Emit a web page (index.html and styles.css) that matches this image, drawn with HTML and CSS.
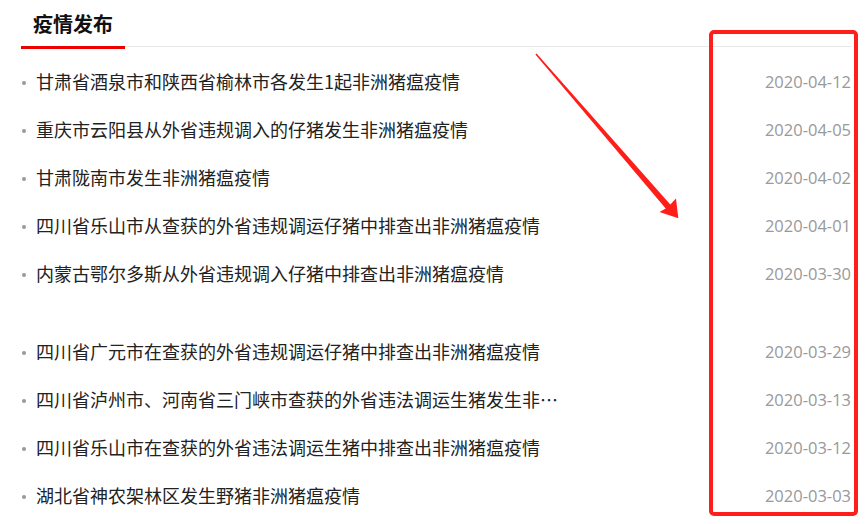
FILE: index.html
```html
<!DOCTYPE html>
<html>
<head>
    <meta charset="utf-8">
    <title>疫情发布</title>
    <link rel="stylesheet" href="styles.css">
</head>
<body>
    <div class="panel">
        <div class="panel-head">
            <h2 class="tab">疫情发布</h2>
        </div>

        <ul class="news-list">
            <li class="news-item"><span class="news-title">甘肃省酒泉市和陕西省榆林市各发生1起非洲猪瘟疫情</span><span class="news-date">2020-04-12</span></li>
            <li class="news-item"><span class="news-title">重庆市云阳县从外省违规调入的仔猪发生非洲猪瘟疫情</span><span class="news-date">2020-04-05</span></li>
            <li class="news-item"><span class="news-title">甘肃陇南市发生非洲猪瘟疫情</span><span class="news-date">2020-04-02</span></li>
            <li class="news-item"><span class="news-title">四川省乐山市从查获的外省违规调运仔猪中排查出非洲猪瘟疫情</span><span class="news-date">2020-04-01</span></li>
            <li class="news-item"><span class="news-title">内蒙古鄂尔多斯从外省违规调入仔猪中排查出非洲猪瘟疫情</span><span class="news-date">2020-03-30</span></li>
        </ul>

        <ul class="news-list">
            <li class="news-item"><span class="news-title">四川省广元市在查获的外省违规调运仔猪中排查出非洲猪瘟疫情</span><span class="news-date">2020-03-29</span></li>
            <li class="news-item"><span class="news-title">四川省泸州市、河南省三门峡市查获的外省违法调运生猪发生非洲猪瘟疫情</span><span class="news-date">2020-03-13</span></li>
            <li class="news-item"><span class="news-title">四川省乐山市在查获的外省违法调运生猪中排查出非洲猪瘟疫情</span><span class="news-date">2020-03-12</span></li>
            <li class="news-item"><span class="news-title">湖北省神农架林区发生野猪非洲猪瘟疫情</span><span class="news-date">2020-03-03</span></li>
        </ul>
    </div>

    <!-- 标注：红框和箭头 -->
    <div class="mark-box"></div>
    <svg class="mark-arrow" width="868" height="524" viewBox="0 0 868 524">
        <polygon fill="#ff1f1a" points="536.6,53.5 670.3,204.5 676,198.5 678.3,218.3 659.5,212 665.7,208.5 535.4,54.5"/>
    </svg>
</body>
</html>
```

FILE: styles.css
```css
body {
    margin: 0;
    background: #fff;
    font-family: "Noto Sans CJK SC", "Microsoft YaHei", sans-serif;
}
.panel {
    width: 830px;
    margin-left: 21px;
}
.panel-head {
    display: flex;
    border-bottom: 1px solid #e8e8e8;
}
.tab {
    margin: 0 0 -3px 0;
    padding: 10px 12px 8px;
    font-size: 20px;
    line-height: 28px;
    font-weight: bold;
    color: #111;
    border-bottom: 3px solid #e00;
}
.news-list {
    list-style: none;
    margin: 10px 0 0;
    padding: 0;
}
.news-list + .news-list {
    margin-top: 30px;
}
.news-item {
    display: flex;
    align-items: center;
    justify-content: space-between;
    height: 48px;
}
.news-item::before {
    content: "";
    width: 4px;
    height: 4px;
    margin: 3px 10px 0 1px;
    border-radius: 50%;
    background: #999;
    flex: none;
}
.news-title {
    flex: 1;
    max-width: 523px;
    margin-right: auto;
    font-size: 18px;
    color: #222;
    white-space: nowrap;
    overflow: hidden;
    text-overflow: ellipsis;
}
.news-date {
    font-family: "Open Sans", sans-serif;
    font-size: 16.5px;
    color: #999;
}
.mark-box {
    position: absolute;
    left: 709px;
    top: 30px;
    width: 149px;
    height: 486px;
    box-sizing: border-box;
    border: 4px solid #ff1f1a;
    border-radius: 5px;
}
.mark-arrow {
    position: absolute;
    left: 0;
    top: 0;
}
```
